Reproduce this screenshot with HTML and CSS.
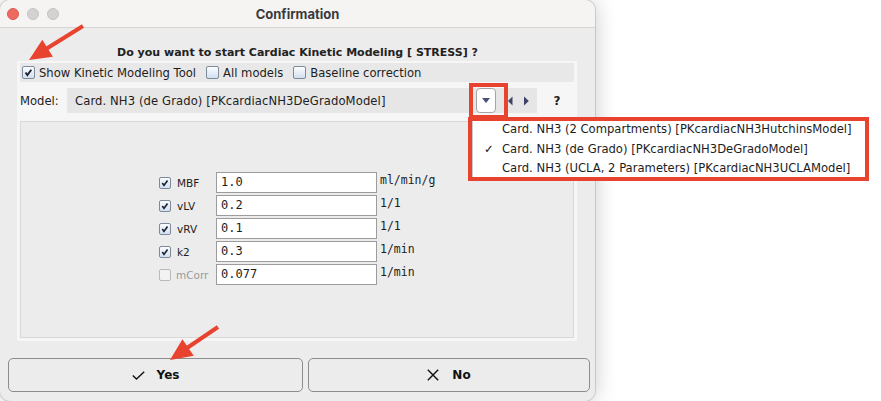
FILE: index.html
```html
<!DOCTYPE html>
<html lang="en">
<head>
  <meta charset="UTF-8" />
  <title>Confirmation</title>
  <link rel="stylesheet" href="styles.css">
</head>
<body>
  <div class="window">
    <div class="titlebar">
      <div class="lights">
        <span class="light red"></span>
        <span class="light"></span>
        <span class="light"></span>
      </div>
      <div class="title">Confirmation</div>
    </div>

    <div class="content">
      <div class="question">Do you want to start Cardiac Kinetic Modeling [ STRESS] ?</div>

      <div class="panel">
        <div class="options">
          <label class="opt">
            <span class="cb"><svg viewBox="0 0 13 13"><path d="M3 6.5 L5.2 9.6 L9.8 3.2" /></svg></span>
            Show Kinetic Modeling Tool
          </label>
          <label class="opt"><span class="cb"></span>All models</label>
          <label class="opt"><span class="cb"></span>Baseline correction</label>
        </div>

        <div class="model-row">
          <span class="model-label">Model:</span>
          <div class="combo">
            <span class="combo-text">Card. NH3 (de Grado) [PKcardiacNH3DeGradoModel]</span>
            <span class="drop"><svg viewBox="0 0 8 5"><path d="M0 0 H8 L4 5 Z" /></svg></span>
            <span class="nav">
              <svg viewBox="0 0 7 10"><path class="bar" d="M0.75 0.5 V9.5" /><path d="M6.5 0.5 V9.5 L2 5 Z" /></svg>
              <svg viewBox="0 0 7 10"><path d="M1 0.5 V9.5 L5.8 5 Z" /></svg>
            </span>
          </div>
          <span class="help">?</span>
        </div>

        <div class="params">
          <div class="param-grid">
            <label class="pname"><span class="cb small"><svg viewBox="0 0 13 13"><path d="M3 6.5 L5.2 9.6 L9.8 3.2" /></svg></span>MBF</label>
            <div class="field">1.0</div>
            <span class="unit">ml/min/g</span>

            <label class="pname"><span class="cb small"><svg viewBox="0 0 13 13"><path d="M3 6.5 L5.2 9.6 L9.8 3.2" /></svg></span>vLV</label>
            <div class="field">0.2</div>
            <span class="unit">1/1</span>

            <label class="pname"><span class="cb small"><svg viewBox="0 0 13 13"><path d="M3 6.5 L5.2 9.6 L9.8 3.2" /></svg></span>vRV</label>
            <div class="field">0.1</div>
            <span class="unit">1/1</span>

            <label class="pname"><span class="cb small"><svg viewBox="0 0 13 13"><path d="M3 6.5 L5.2 9.6 L9.8 3.2" /></svg></span>k2</label>
            <div class="field">0.3</div>
            <span class="unit">1/min</span>

            <label class="pname disabled"><span class="cb small off"></span>mCorr</label>
            <div class="field">0.077</div>
            <span class="unit">1/min</span>
          </div>
        </div>
      </div>

      <div class="buttons">
        <button class="btn yes">
          <svg viewBox="0 0 13 9"><path d="M0.8 4.5 L4.5 8 L12.2 0.8" /></svg>
          Yes
        </button>
        <button class="btn no">
          <svg viewBox="0 0 12 12"><path d="M0.8 0.8 L11.2 11.2 M11.2 0.8 L0.8 11.2" /></svg>
          No
        </button>
      </div>
    </div>
  </div>

  <!-- open model list -->
  <div class="popup">
    <div class="item">Card. NH3 (2 Compartments) [PKcardiacNH3HutchinsModel]</div>
    <div class="item selected">Card. NH3 (de Grado) [PKcardiacNH3DeGradoModel]</div>
    <div class="item">Card. NH3 (UCLA, 2 Parameters) [PKcardiacNH3UCLAModel]</div>
  </div>

  <!-- annotations -->
  <div class="mark mark-drop"></div>
  <div class="mark mark-popup"></div>
  <svg class="arrows" viewBox="0 0 881 401">
    <line x1="83" y1="26" x2="46" y2="49" />
    <polygon points="29,60 52.9,56.8 42.3,39.8" />
    <line x1="218" y1="327" x2="187" y2="348" />
    <polygon points="170,360 193.8,355.7 182.4,339.3" />
  </svg>
</body>
</html>
```

FILE: styles.css
```css
* {
  box-sizing: border-box;
}
body {
  margin: 0;
  width: 881px;
  height: 401px;
  background: #fff;
  font-family: 'DejaVu Sans', sans-serif;
  font-size: 11.6px;
  color: #1d1d1d;
  position: relative;
  overflow: hidden;
}

.window {
  width: 595px;
  height: 401px;
  background: #ececec;
  border-radius: 10px;
  box-shadow: 0 0 22px rgba(0, 0, 0, 0.22), 0 0 0 1px rgba(0, 0, 0, 0.12);
  overflow: hidden;
}

.titlebar {
  height: 28px;
  background: #f5f4f2;
  border-bottom: 1px solid #d6d5d3;
  display: flex;
  align-items: center;
  position: relative;
}
.lights {
  display: flex;
  gap: 8px;
  padding-left: 7px;
}
.light {
  width: 12px;
  height: 12px;
  border-radius: 50%;
  background: #d3d2d1;
  border: 1px solid #c4c3c2;
}
.light.red {
  background: #ee6a5f;
  border-color: #d85b50;
}
.title {
  position: absolute;
  left: 0;
  right: 0;
  text-align: center;
  font-family: Inter, 'Open Sans', sans-serif;
  font-weight: 700;
  font-size: 13px;
  color: #3a3a3a;
}

.content {
  padding-top: 17px;
}
.question {
  height: 16px;
  line-height: 16px;
  text-align: center;
  font-weight: bold;
  font-size: 11px;
  color: #222;
}

.panel {
  margin: 0 18px 0 17px;
  padding: 2px 3px 3px 3px;
  background: #f6f6f6;
}

.options {
  height: 19px;
  background: #e8e8e8;
  display: flex;
  align-items: center;
  gap: 10px;
  padding-left: 2px;
}
.opt {
  display: flex;
  align-items: center;
  gap: 4px;
}

.cb {
  width: 13px;
  height: 13px;
  border: 1px solid #7d8a9b;
  border-radius: 2px;
  background: linear-gradient(#fbfcfe, #d3e0f0);
  display: inline-block;
  flex: none;
}
.cb svg {
  display: block;
  width: 100%;
  height: 100%;
}
.cb path {
  fill: none;
  stroke: #1c2433;
  stroke-width: 2.2;
}
.cb.small {
  width: 12px;
  height: 12px;
}
.cb.off {
  background: #f2f2f2;
  border-color: #b9b9b9;
}

.model-row {
  margin-top: 6px;
  height: 25px;
  display: flex;
  align-items: center;
}
.model-label {
  width: 47px;
}
.combo {
  width: 470px;
  height: 100%;
  background: #e6e6e6;
  display: flex;
  align-items: center;
  padding-left: 8px;
}
.combo-text {
  flex: 1;
  letter-spacing: 0.1px;
}
.drop {
  width: 20px;
  height: 100%;
  background: #fff;
  border: 1px solid #a5a5a5;
  border-radius: 4px;
  display: flex;
  align-items: center;
  justify-content: center;
}
.drop svg {
  width: 8px;
  height: 5px;
}
.drop path {
  fill: #4b5070;
}
.nav {
  display: flex;
  gap: 10px;
  padding: 0 7px 0 10px;
}
.nav svg {
  width: 7px;
  height: 10px;
}
.nav path {
  fill: #3d4368;
}
.nav path.bar {
  fill: none;
  stroke: #8e95b0;
  stroke-width: 1.5;
}
.help {
  flex: 1;
  text-align: center;
  font-weight: bold;
  font-size: 12px;
  padding-left: 3px;
}

.params {
  margin-top: 8px;
  height: 217px;
  border: 1px solid #d9d7d7;
  background: #ececec;
  padding: 50px 0 0 138px;
}
.param-grid {
  display: grid;
  grid-template-columns: 57px 161px auto;
  grid-auto-rows: 21px;
  row-gap: 2px;
}
.pname {
  display: flex;
  align-items: center;
  gap: 6px;
  font-size: 10.5px;
}
.pname.disabled {
  color: #9a9a9a;
  gap: 5px;
}
.field {
  background: #fff;
  border: 1px solid #9c9c9c;
  font-family: 'DejaVu Sans Mono', monospace;
  font-size: 12px;
  line-height: 19px;
  padding-left: 4px;
}
.unit {
  font-family: 'DejaVu Sans Mono', monospace;
  font-size: 11.5px;
  padding: 1px 0 0 3px;
}

.buttons {
  margin-top: 17px;
  display: flex;
  gap: 5px;
  padding: 0 5px 0 8px;
}
.btn {
  height: 34px;
  background: #ececec;
  border: 1px solid #8c8c8c;
  border-radius: 5px;
  display: flex;
  align-items: center;
  justify-content: center;
  gap: 12px;
  font-family: 'DejaVu Sans', sans-serif;
  font-weight: bold;
  font-size: 12px;
  color: #111;
  padding: 0;
}
.btn.yes {
  width: 295px;
}
.btn.no {
  flex: 1;
  gap: 13px;
}
.btn svg {
  width: 13px;
  height: 9px;
}
.btn.no svg {
  width: 12px;
  height: 12px;
}
.btn path {
  fill: none;
  stroke: #111;
  stroke-width: 1.4;
}

.popup {
  position: absolute;
  left: 472px;
  top: 119px;
  width: 394px;
  height: 60px;
  background: #fff;
  border: 1px solid #c9c9c9;
}
.item {
  height: 19.5px;
  line-height: 19.5px;
  padding-left: 29px;
  position: relative;
}
.item.selected::before {
  content: "\2713";
  position: absolute;
  left: 11px;
}

.mark {
  position: absolute;
  border: 4px solid #e8432e;
}
.mark-drop {
  left: 469px;
  top: 83px;
  width: 39px;
  height: 36px;
}
.mark-popup {
  left: 468px;
  top: 117px;
  width: 401px;
  height: 64px;
}

.arrows {
  position: absolute;
  left: 0;
  top: 0;
  width: 881px;
  height: 401px;
  pointer-events: none;
}
.arrows line {
  stroke: #e8432e;
  stroke-width: 4;
}
.arrows polygon {
  fill: #e8432e;
}
```
